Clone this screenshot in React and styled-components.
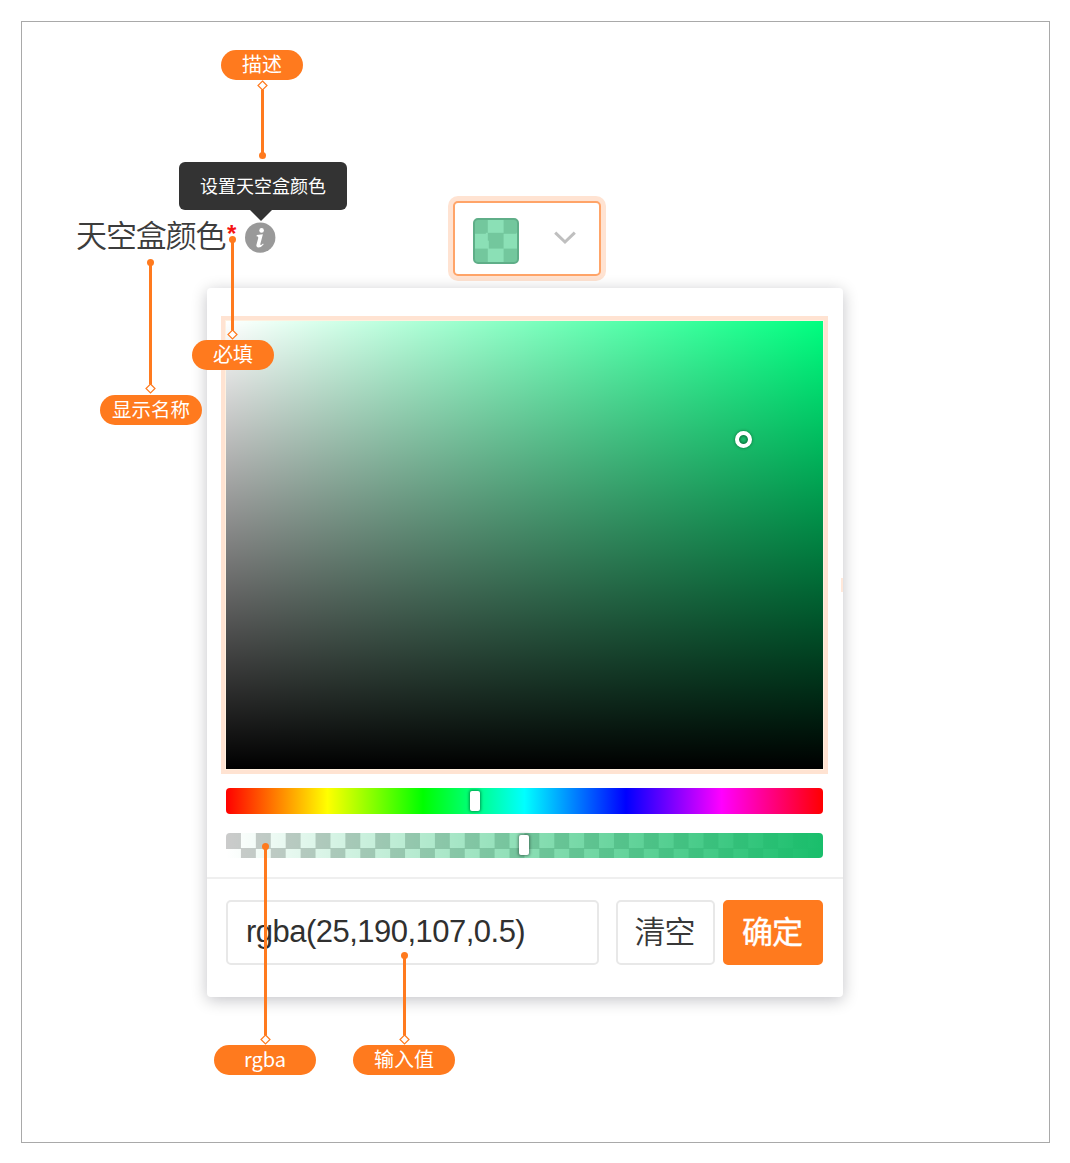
import React from "react";
import styled, { createGlobalStyle } from "styled-components";

const ORANGE = "#ff7a1e";
const CJK = '"Noto Sans CJK SC", sans-serif';

const GlobalStyle = createGlobalStyle`
  *, *::before, *::after { box-sizing: border-box; }
  body { margin: 0; background: #fff; font-family: ${CJK}; }
`;

const Page = styled.main`
  padding: 21px 20px 20px 21px;
  width: 1070px;
  height: 1163px;
`;

const Frame = styled.section`
  position: relative;
  width: 1029px;
  height: 1122px;
  padding: 179px 0 0 54px;
  border: 1px solid #a9a9a9;
`;

const Field = styled.div`
  display: flex;
  height: 75px;
`;

const FieldLabel = styled.div`
  display: flex;
  align-items: flex-start;
  width: 377px;
  padding-top: 15px;
`;

const LabelText = styled.span`
  width: 150px;
  font: 350 31px/36px ${CJK};
  letter-spacing: -1.1px;
  white-space: nowrap;
  color: #3c3c3c;
`;

const Required = styled.span`
  width: 12px;
  margin: 4px 6px 0 1px;
  font: 700 24px/28px "Liberation Sans", Arial, sans-serif;
  color: #f51414;
`;

const InfoAnchor = styled.span`
  position: relative;
  display: block;
  width: 31px;
  height: 31px;
  margin-top: 6px;
`;

const Tooltip = styled.span`
  position: absolute;
  left: -66px;
  bottom: 43px;
  width: 168px;
  height: 48px;
  border-radius: 6px;
  background: #333;
  color: #fff;
  font: 400 18px/46px ${CJK};
  text-align: center;
  white-space: nowrap;

  &::after {
    content: "";
    position: absolute;
    top: 100%;
    left: 71px;
    border: 11px solid transparent;
    border-bottom: 0;
    border-top-color: #333;
  }
`;

const Trigger = styled.button`
  display: flex;
  align-items: center;
  gap: 35px;
  width: 148px;
  height: 75px;
  padding: 5px 0 0 18px;
  margin: 0;
  border: 2px solid #ffa468;
  border-radius: 5px;
  background: #fff;
  box-shadow: 0 0 0 5px #ffe3d2;
`;

const Swatch = styled.span`
  width: 46px;
  height: 46px;
  border: 2px solid #5fae88;
  border-radius: 5px;
  background: conic-gradient(#8be0b6 25%, #73c79d 0 50%, #8be0b6 0 75%, #73c79d 0);
  background-size: 30.6px 30.6px;
  background-origin: border-box;
`;

const Panel = styled.div`
  position: relative;
  width: 636px;
  height: 709px;
  margin: 12px 0 0 131px;
  border-radius: 4px;
  background: #fff;
  box-shadow: 0 3px 16px rgba(0, 0, 20, 0.24);
`;

const FocusTrace = styled.i`
  position: absolute;
  right: 0;
  top: 290px;
  width: 2px;
  height: 14px;
  background: #ffe8da;
`;

const PickerBody = styled.div`
  display: flex;
  flex-direction: column;
  height: 591px;
  padding: 33px 20px 0 19px;
  border-bottom: 2px solid #efefef;
`;

const Saturation = styled.div`
  position: relative;
  height: 448px;
  flex: none;
  background:
    linear-gradient(to top, #000, transparent),
    linear-gradient(to right, #fff, transparent),
    #00ff80;
  box-shadow: 0 0 0 1px #fff0df, 0 0 0 5px #ffe3d2;
`;

const Cursor = styled.i`
  position: absolute;
  left: 509px;
  top: 110px;
  width: 17px;
  height: 17px;
  border: 4px solid #fff;
  border-radius: 50%;
  box-shadow: 0 0 3px rgba(0, 50, 20, 0.6), inset 0 0 3px 1px rgba(0, 50, 20, 0.6);
`;

const Slider = styled.div`
  position: relative;
  flex: none;
  height: ${(p) => p.$height}px;
  margin-top: 19px;
  border-radius: 4px;
  background: ${(p) => p.$fill};
`;

const Thumb = styled.i`
  position: absolute;
  left: ${(p) => p.$x}px;
  top: ${(p) => p.$y}px;
  width: 10px;
  height: 20px;
  border-radius: 2px;
  background: #fff;
  box-shadow: 0 0 3px 1px rgba(0, 0, 0, 0.4);
`;

const Footer = styled.div`
  display: flex;
  padding: 21px 20px 0 19px;
`;

const ValueInput = styled.div`
  width: 373px;
  height: 65px;
  margin-right: 17px;
  padding-left: 18px;
  border: 2px solid #e8e8e8;
  border-radius: 5px;
  color: #303030;
  font: 400 31px/60px "Liberation Sans", Arial, sans-serif;
  letter-spacing: -0.52px;
  white-space: nowrap;
`;

const Button = styled.button`
  width: ${(p) => (p.$primary ? 100 : 99)}px;
  height: 65px;
  margin: 0 ${(p) => (p.$primary ? 0 : 8)}px 0 0;
  padding: 0 2px 6px 0;
  border: 2px solid ${(p) => (p.$primary ? ORANGE : "#e8e8e8")};
  border-radius: 5px;
  background: ${(p) => (p.$primary ? ORANGE : "#fff")};
  color: ${(p) => (p.$primary ? "#fff" : "#383838")};
  font: ${(p) => (p.$primary ? 400 : 350)} 31px/55px ${CJK};
  letter-spacing: -1px;
  -webkit-text-stroke: ${(p) => (p.$primary ? "0.4px #fff" : "0")};
`;

const Callout = styled.div`
  position: absolute;
  left: ${(p) => p.$left - 22}px;
  top: ${(p) => p.$top - 22}px;
  display: flex;
  flex-direction: column;
  align-items: flex-start;
`;

const Pill = styled.span`
  width: ${(p) => p.$width}px;
  height: 30px;
  border-radius: 15px;
  background: ${ORANGE};
  color: #fff;
  font: 400 ${(p) => p.$size || 20}px/28px ${CJK};
  text-align: center;
`;

const Stem = styled.svg`
  display: block;
  flex: none;
  margin-left: ${(p) => p.$indent}px;
  margin-bottom: ${(p) => p.$gap || 0}px;
`;

const InfoIcon = styled.svg`
  display: block;
`;

const Chevron = styled.svg`
  margin-top: -7px;
`;

// A leader line: dot at one end, diamond at the pill's end; `down` flips it.
function Leader({ length, indent, gap, down }) {
  const dotY = down ? length - 3.5 : 3.5;
  const diamondY = down ? 5.5 : length - 5.5;
  return (
    <Stem $indent={indent} $gap={gap} width="11" height={length} viewBox={`0 0 11 ${length}`}>
      <line x1="5.5" x2="5.5" y1={dotY} y2={down ? diamondY + 4 : diamondY - 4} stroke={ORANGE} strokeWidth="3" />
      <circle cx="5.5" cy={dotY} r="3.5" fill={ORANGE} />
      <path d={`M5.5 ${diamondY - 4.5}l4.5 4.5l-4.5 4.5l-4.5 -4.5z`} fill="#fff" stroke={ORANGE} strokeWidth="1.2" />
    </Stem>
  );
}

const pinned = [
  { text: "必填", left: 192, top: 236, width: 82, length: 104, indent: 35 },
  { text: "显示名称", left: 100, top: 259, width: 102, length: 135, indent: 45, gap: 1, size: 19.5 },
  { text: "rgba", left: 214, top: 843, width: 102, length: 202, indent: 46 },
  { text: "输入值", left: 353, top: 952, width: 102, length: 93, indent: 46 },
];

const hueFill = "linear-gradient(to right, #f00 0%, #ff0 17%, #0f0 33%, #0ff 50%, #00f 67%, #f0f 83%, #f00 100%)";
const alphaFill =
  "linear-gradient(to right, rgba(25,190,107,0), rgb(25,190,107)), " +
  "conic-gradient(#fff 25%, #cbcbcb 0 50%, #fff 0 75%, #cbcbcb 0) 0 0 / 29.85px 31px";

export default function App() {
  return (
    <Page>
      <GlobalStyle />
      <Frame>
        <Field>
          <FieldLabel>
            <LabelText>天空盒颜色</LabelText>
            <Required>*</Required>
            <InfoAnchor>
              <InfoIcon width="31" height="31" viewBox="0 0 31 31">
                <circle cx="15.2" cy="15.6" r="15.2" fill="#999" />
                <circle cx="16.6" cy="8.4" r="2.3" fill="#fff" />
                <path d="M11.8 13.1l6.1-.8-2.5 9.4q-.4 1.6.6 1.4 1-.3 2-1.5l.7.6q-2.3 3.2-5.2 3.2-2.7 0-2-2.8l1.7-6.4q.3-1.5-.6-1.7l-1.1-.2z" fill="#fff" />
              </InfoIcon>
              <Tooltip>设置天空盒颜色</Tooltip>
            </InfoAnchor>
          </FieldLabel>
          <Trigger>
            <Swatch />
            <Chevron width="22" height="14" viewBox="0 0 22 14" fill="none" stroke="#bfbfbf" strokeWidth="3">
              <path d="M1.2 1.6L11 11L20.8 1.6" />
            </Chevron>
          </Trigger>
        </Field>

        <Panel>
          <FocusTrace />
          <PickerBody>
            <Saturation><Cursor /></Saturation>
            <Slider $height={26} $fill={hueFill}><Thumb $x={244} $y={3} /></Slider>
            <Slider $height={25} $fill={alphaFill}><Thumb $x={293} $y={2} /></Slider>
          </PickerBody>
          <Footer>
            <ValueInput>rgba(25,190,107,0.5)</ValueInput>
            <Button>清空</Button>
            <Button $primary>确定</Button>
          </Footer>
        </Panel>

        <Callout $left={221} $top={50}>
          <Pill $width={82}>描述</Pill>
          <Leader down length={79} indent={36} />
        </Callout>
        {pinned.map((c) => (
          <Callout key={c.text} $left={c.left} $top={c.top}>
            <Leader length={c.length} indent={c.indent} gap={c.gap} />
            <Pill $width={c.width} $size={c.size}>{c.text}</Pill>
          </Callout>
        ))}
      </Frame>
    </Page>
  );
}
